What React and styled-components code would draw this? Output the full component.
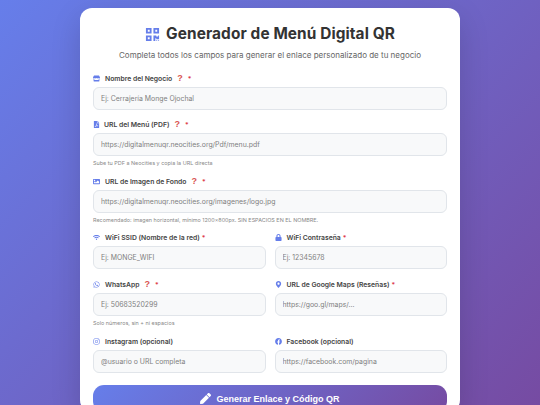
import React from "react";
import styled, { createGlobalStyle } from "styled-components";
import { FaQrcode, FaStore, FaFilePdf, FaImage, FaWifi, FaLock, FaWhatsapp, FaMapMarkerAlt, FaInstagram, FaFacebook, FaPen } from "react-icons/fa";

const Global = createGlobalStyle`
  html, body { margin: 0; height: 405px; overflow: hidden; }
  body { font-family: "Inter", "Noto Sans", sans-serif; }
  * { box-sizing: border-box; }
`;
const Page = styled.div`
  height: 405px; overflow: hidden; padding-top: 8px;
  display: flex; justify-content: center; align-items: flex-start;
  background: linear-gradient(135deg, #667eea 0%, #764ba2 100%);
`;
const Card = styled.main`
  width: 380px; flex: none; background: #fff; border-radius: 12px;
  padding: 16px 13px 0; box-shadow: 0 10px 30px rgba(0,0,0,.15);
`;
const Title = styled.h1`
  margin: 0; display: flex; justify-content: center; align-items: center; gap: 6px;
  font-size: 15.4px; line-height: 20px; font-weight: 700; color: #333; letter-spacing: .1px;
  svg { width: 15px; height: 15px; color: #667eea; }
`;
const Subtitle = styled.p`
  margin: 5px 0 11px; text-align: center; font-size: 8px; line-height: 12px; color: #666;
`;
const Field = styled.div`
  margin-bottom: ${p => p.$mb ?? 9}px; min-width: 0;
`;
const Label = styled.label`
  display: flex; align-items: center; height: 12px; margin-bottom: 3px;
  font-size: 6.8px; font-weight: 600; color: #444;
  svg { width: 7px; height: 7px; color: #667eea; margin-right: ${p => p.$gap ?? 5}px; flex: none; }
`;
const Help = styled.span`
  color: #d9534f; font: 700 9px "Liberation Sans", sans-serif; margin: 0 3px 0 5px;
`;
const Req = styled.span`
  color: #dc3545; margin-left: 2px;
`;
const Input = styled.input`
  display: block; width: 100%; height: 23px; padding: 0 7px;
  border: 1px solid #e1e5ea; border-radius: 6px; background: #f8f9fa;
  font: 400 6.9px "Inter", "Noto Sans", sans-serif; color: #333; outline: none;
  &::placeholder { color: #808080; opacity: 1; }
`;
const Hint = styled.small`
  display: block; margin-top: 3px; height: 8px; font-size: 5.45px; line-height: 8px; color: #888;
`;
const Row = styled.div`
  display: grid; grid-template-columns: 1fr 1fr; gap: 9px;
`;
const Submit = styled.button`
  width: 100%; height: 27px; margin-top: 3px; border: 0; border-radius: 11px;
  display: flex; align-items: center; justify-content: center; gap: 5px;
  background: linear-gradient(135deg, #667eea 0%, #764ba2 100%); color: #fff;
  font: 700 9px "Liberation Sans", sans-serif;
  svg { width: 11px; height: 11px; }
`;

const F = ({ icon: I, label, help, req = true, ph, hint, gap, mb }) => (
  <Field $mb={mb}>
    <Label $gap={gap}><I />{label}{help && <Help>?</Help>}{req && <Req>*</Req>}</Label>
    <Input placeholder={ph} />
    {hint && <Hint>{hint}</Hint>}
  </Field>
);

export default function App() {
  return (
    <Page>
      <Global />
      <Card>
        <Title><FaQrcode />Generador de Menú Digital QR</Title>
        <Subtitle>Completa todos los campos para generar el enlace personalizado de tu negocio</Subtitle>
        <F icon={FaStore} label="Nombre del Negocio" help ph="Ej: Cerrajería Monge Ojochal" mb={8} />
        <F icon={FaFilePdf} label="URL del Menú (PDF)" help gap={4} ph="https://digitalmenuqr.neocities.org/Pdf/menu.pdf" hint="Sube tu PDF a Neocities y copia la URL directa" mb={8} />
        <F icon={FaImage} label="URL de Imagen de Fondo" help ph="https://digitalmenuqr.neocities.org/imagenes/logo.jpg" hint="Recomendado: imagen horizontal, mínimo 1200x800px. SIN ESPACIOS EN EL NOMBRE." mb={7} />
        <Row>
          <F icon={FaWifi} label="WiFi SSID (Nombre de la red)" ph="Ej: MONGE_WIFI" />
          <F icon={FaLock} label="WiFi Contraseña" ph="Ej: 12345678" />
        </Row>
        <Row>
          <F icon={FaWhatsapp} label="WhatsApp" help ph="Ej: 50683520299" hint="Solo números, sin + ni espacios" mb={8} />
          <F icon={FaMapMarkerAlt} label="URL de Google Maps (Reseñas)" ph="https://goo.gl/maps/..." />
        </Row>
        <Row>
          <F icon={FaInstagram} label="Instagram (opcional)" req={false} ph="@usuario o URL completa" />
          <F icon={FaFacebook} label="Facebook (opcional)" req={false} ph="https://facebook.com/pagina" />
        </Row>
        <Submit><FaPen />Generar Enlace y Código QR</Submit>
      </Card>
    </Page>
  );
}
